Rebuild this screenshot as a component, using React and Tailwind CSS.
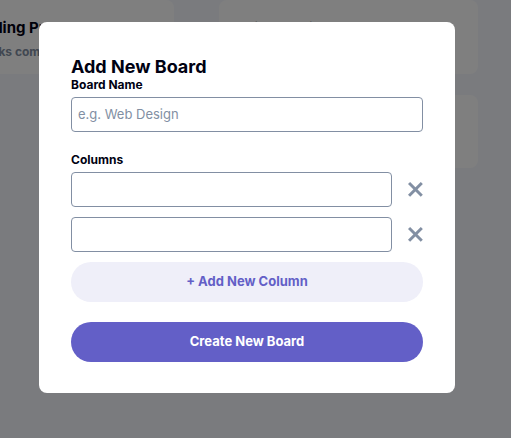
import React from "react";

function Cross() {
  return (
    <svg width="15" height="15" viewBox="0 0 15 15" xmlns="http://www.w3.org/2000/svg">
      <g fill="#828FA3" fillRule="evenodd">
        <path d="m12.728 0 2.122 2.122L2.122 14.85 0 12.728z" />
        <path d="M0 2.122 2.122 0 14.85 12.728l-2.122 2.122z" />
      </g>
    </svg>
  );
}

export default function App() {
  const font = { fontFamily: "Inter, 'Noto Sans', sans-serif" };
  return (
    <div className="relative w-[511px] h-[438px] overflow-hidden bg-[#f4f7fd]" style={font}>
      {/* background board */}
      <div className="grid grid-cols-[259px_259px] gap-x-[45px] gap-y-[21px] ml-[-85px] w-[563px]">
        <div className="h-[74px] bg-white rounded-lg pl-[24px] pt-[18px] overflow-hidden">
          <p className="text-[15px] leading-[19px] font-bold text-[#000112] whitespace-nowrap">Onboarding Process</p>
          <p className="mt-[7px] ml-[-17px] text-[12px] leading-[15px] font-bold text-[#828fa3] whitespace-nowrap">0 of 3 subtasks completed</p>
        </div>
        <div className="h-[74px] bg-white rounded-lg px-4 pt-[19px] overflow-hidden">
          <p className="text-[15px] leading-[19px] font-bold text-[#000112] whitespace-nowrap">Build the final layout</p>
          <p className="mt-[7px] text-[12px] leading-[15px] font-bold text-[#828fa3] whitespace-nowrap">1 of 3 subtasks completed</p>
        </div>
        <div />
        <div className="h-[73px] bg-white rounded-lg px-4 pt-[18px] overflow-hidden">
          <p className="text-[15px] leading-[19px] font-bold text-[#000112] whitespace-nowrap">Review content</p>
          <p className="mt-[7px] text-[12px] leading-[15px] font-bold text-[#828fa3] whitespace-nowrap">0 of 2 subtasks completed</p>
        </div>
      </div>

      {/* overlay */}
      <div className="absolute inset-0 bg-black/50 pt-[22px] pl-[39px]">
        <div className="w-[416px] h-[371px] bg-white rounded-lg px-8 pt-[34px]">
          <h2 className="text-[18px] leading-[21px] font-bold text-[#000112]">Add New Board</h2>
          <label className="block text-[12px] leading-[15px] font-bold text-[#000112]">Board Name</label>
          <div className="mt-[5px] h-[35px] rounded border border-[#828fa3] flex items-center px-[6px]">
            <span className="text-[13px] text-[#828fa3]">e.g. Web Design</span>
          </div>
          <label className="block text-[12px] leading-[15px] font-bold text-[#000112] mt-[20px]">Columns</label>
          <div className="mt-[5px] flex flex-col gap-[10px]">
            <div className="flex items-center">
              <div className="w-[321px] h-[35px] rounded border border-[#828fa3]" />
              <div className="ml-auto flex items-center justify-center w-[16px]">
                <Cross />
              </div>
            </div>
            <div className="flex items-center">
              <div className="w-[321px] h-[35px] rounded border border-[#828fa3]" />
              <div className="ml-auto flex items-center justify-center w-[16px]">
                <Cross />
              </div>
            </div>
          </div>
          <div className="mt-[10px] h-[40px] rounded-full bg-[#efeff9] flex items-center justify-center text-[13px] font-bold text-[#635fc7]">
            + Add New Column
          </div>
          <div className="mt-[20px] h-[40px] rounded-full bg-[#635fc7] flex items-center justify-center text-[13px] font-bold text-white">
            Create New Board
          </div>
        </div>
      </div>
    </div>
  );
}
